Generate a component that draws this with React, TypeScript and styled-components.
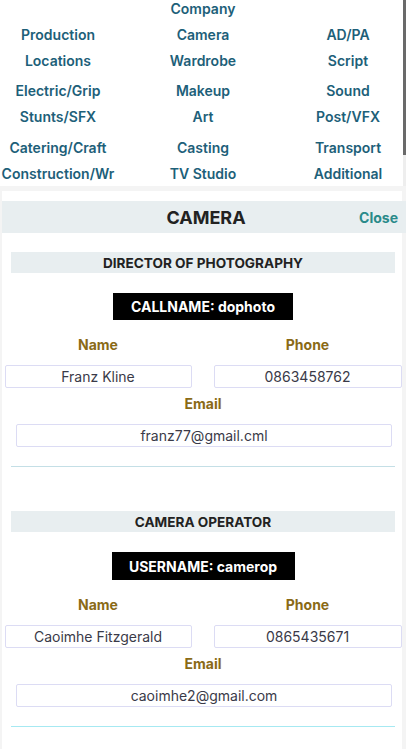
import React from "react";
import styled, { createGlobalStyle } from "styled-components";

const Global = createGlobalStyle`
  html, body { margin: 0; padding: 0; }
  body {
    background: #f4f4f4;
    font-family: Inter, "Open Sans", "Liberation Sans", sans-serif;
    overflow: hidden;
  }
`;

const Page = styled.div`
  width: 406px;
  display: flex;
  flex-direction: column;
`;

const Nav = styled.nav`
  position: relative;
  width: 406px;
  background: #ffffff;
  display: flex;
  flex-direction: column;
  overflow: hidden;
  &::before {
    content: "";
    position: absolute;
    right: 0;
    top: 0;
    width: 3px;
    height: 100%;
    background: #eeeeee;
  }
  &::after {
    content: "";
    position: absolute;
    right: 0;
    top: 0;
    width: 3px;
    height: 155px;
    background: #6a6a6a;
  }
`;

const NavGroup = styled.div<{ $top: number; $rowH: number }>`
  display: grid;
  grid-template-columns: repeat(3, 116px);
  justify-content: space-between;
  grid-auto-rows: ${(p) => p.$rowH}px;
  margin-top: ${(p) => p.$top}px;
`;

const NavItem = styled.div<{ $col?: number }>`
  grid-column: ${(p) => p.$col ?? "auto"};
  display: flex;
  align-items: center;
  justify-content: center;
  white-space: nowrap;
  font-size: 14px;
  font-weight: 600;
  color: #1d6079;
`;

const Panel = styled.section`
  margin-top: 5px;
  margin-left: 2px;
  width: 400px;
  background: #ffffff;
  padding-top: 10px;
  min-height: 600px;
`;

const HeaderBand = styled.header`
  width: 404px;
  height: 32px;
  background: #e8eef0;
  display: grid;
  grid-template-columns: 1fr auto 1fr;
  align-items: center;
`;

const HeaderTitle = styled.h2`
  grid-column: 2;
  margin: 0 0 0 4px;
  font-size: 18px;
  font-weight: 700;
  color: #222222;
`;

const CloseBtn = styled.button`
  justify-self: end;
  margin-right: 8px;
  border: 0;
  background: none;
  padding: 0;
  font-family: inherit;
  font-size: 14px;
  font-weight: 700;
  color: #2a8a8a;
`;

const Section = styled.div<{ $top: number }>`
  margin-top: ${(p) => p.$top}px;
  display: flex;
  flex-direction: column;
  align-items: center;
`;

const RoleBar = styled.div`
  width: 384px;
  margin-left: 2px;
  height: 21px;
  background: #e8eef0;
  display: flex;
  align-items: center;
  justify-content: center;
  font-size: 13.6px;
  font-weight: 700;
  color: #222222;
`;

const CallBox = styled.div<{ $w: number; $h: number }>`
  margin-top: 20px;
  width: ${(p) => p.$w}px;
  height: ${(p) => p.$h}px;
  background: #000000;
  color: #ffffff;
  display: flex;
  align-items: center;
  justify-content: center;
  font-size: 14px;
  font-weight: 700;
  margin-left: 2px;
`;

const PairGrid = styled.div<{ $top: number }>`
  margin-top: ${(p) => p.$top}px;
  width: 397px;
  margin-left: 2px;
  display: grid;
  grid-template-columns: 187px 188px;
  column-gap: 22px;
  row-gap: 12px;
`;

const Label = styled.label`
  display: block;
  text-align: center;
  font-size: 14px;
  font-weight: 700;
  line-height: 16px;
  color: #8a6a16;
`;

const Field = styled.div<{ $w?: number }>`
  box-sizing: border-box;
  width: ${(p) => (p.$w ? `${p.$w}px` : "100%")};
  height: 23px;
  border: 1px solid #dcdcf4;
  border-radius: 2px;
  display: flex;
  align-items: center;
  justify-content: center;
  font-size: 14px;
  color: #3a3a48;
  background: #ffffff;
`;

const EmailLabel = styled(Label)`
  margin-top: 8px;
  margin-left: 2px;
`;

const EmailField = styled(Field)`
  margin-top: 12px;
  margin-left: 4px;
`;

const Divider = styled.hr<{ $color: string }>`
  margin: 19px 0 0 2px;
  width: 384px;
  border: 0;
  height: 1px;
  background: ${(p) => p.$color};
`;

type Member = {
  role: string;
  tag: string;
  tagW: number;
  tagH: number;
  name: string;
  phone: string;
  email: string;
  line: string;
};

const members: Member[] = [
  {
    role: "DIRECTOR OF PHOTOGRAPHY",
    tag: "CALLNAME: dophoto",
    tagW: 180,
    tagH: 27,
    name: "Franz Kline",
    phone: "0863458762",
    email: "franz77@gmail.cml",
    line: "#c4dfe6",
  },
  {
    role: "CAMERA OPERATOR",
    tag: "USERNAME: camerop",
    tagW: 183,
    tagH: 28,
    name: "Caoimhe Fitzgerald",
    phone: "0865435671",
    email: "caoimhe2@gmail.com",
    line: "#a6e9f2",
  },
];

const groups = [
  ["Production", "Camera", "AD/PA", "Locations", "Wardrobe", "Script"],
  ["Electric/Grip", "Makeup", "Sound", "Stunts/SFX", "Art", "Post/VFX"],
  ["Catering/Craft", "Casting", "Transport", "Construction/Wr", "TV Studio", "Additional"],
];

const groupTops = [5, 4, 5];

export default function App() {
  return (
    <Page>
      <Global />
      <Nav>
        <NavGroup $top={0} $rowH={16}>
          <NavItem $col={2}>Company</NavItem>
        </NavGroup>
        {groups.map((g, i) => (
          <NavGroup key={i} $top={groupTops[i]} $rowH={26}>
            {g.map((d) => (
              <NavItem key={d}>{d}</NavItem>
            ))}
          </NavGroup>
        ))}
      </Nav>
      <Panel>
        <HeaderBand>
          <HeaderTitle>CAMERA</HeaderTitle>
          <CloseBtn>Close</CloseBtn>
        </HeaderBand>
        {members.map((m, i) => (
          <Section key={m.role} $top={i === 0 ? 19 : 44}>
            <RoleBar>{m.role}</RoleBar>
            <CallBox $w={m.tagW} $h={m.tagH}>{m.tag}</CallBox>
            <PairGrid $top={17}>
              <Label>Name</Label>
              <Label>Phone</Label>
              <Field>{m.name}</Field>
              <Field>{m.phone}</Field>
            </PairGrid>
            <EmailLabel>Email</EmailLabel>
            <EmailField $w={376}>{m.email}</EmailField>
            <Divider $color={m.line} />
          </Section>
        ))}
      </Panel>
    </Page>
  );
}
